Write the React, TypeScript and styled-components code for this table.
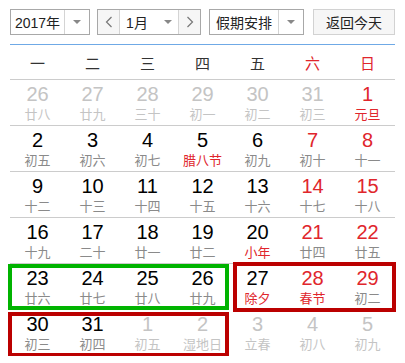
import styled, { createGlobalStyle } from "styled-components";

const GlobalStyle = createGlobalStyle`
    body {
        margin: 0;
        background: #fff;
        font-family: "Liberation Sans", "Noto Sans CJK SC", sans-serif;
    }
`;

type Day = { d: number; l: string; muted?: boolean; red?: boolean; fest?: boolean };

// six weeks of January 2017, Monday first
const weeks: Day[][] = [
    [
        { d: 26, l: "廿八", muted: true },
        { d: 27, l: "廿九", muted: true },
        { d: 28, l: "三十", muted: true },
        { d: 29, l: "初一", muted: true },
        { d: 30, l: "初二", muted: true },
        { d: 31, l: "初三", muted: true },
        { d: 1, l: "元旦", red: true, fest: true },
    ],
    [
        { d: 2, l: "初五" },
        { d: 3, l: "初六" },
        { d: 4, l: "初七" },
        { d: 5, l: "腊八节", fest: true },
        { d: 6, l: "初九" },
        { d: 7, l: "初十", red: true },
        { d: 8, l: "十一", red: true },
    ],
    [
        { d: 9, l: "十二" },
        { d: 10, l: "十三" },
        { d: 11, l: "十四" },
        { d: 12, l: "十五" },
        { d: 13, l: "十六" },
        { d: 14, l: "十七", red: true },
        { d: 15, l: "十八", red: true },
    ],
    [
        { d: 16, l: "十九" },
        { d: 17, l: "二十" },
        { d: 18, l: "廿一" },
        { d: 19, l: "廿二" },
        { d: 20, l: "小年", fest: true },
        { d: 21, l: "廿四", red: true },
        { d: 22, l: "廿五", red: true },
    ],
    [
        { d: 23, l: "廿六" },
        { d: 24, l: "廿七" },
        { d: 25, l: "廿八" },
        { d: 26, l: "廿九" },
        { d: 27, l: "除夕", fest: true },
        { d: 28, l: "春节", red: true, fest: true },
        { d: 29, l: "初二", red: true },
    ],
    [
        { d: 30, l: "初三" },
        { d: 31, l: "初四" },
        { d: 1, l: "初五", muted: true },
        { d: 2, l: "湿地日", muted: true },
        { d: 3, l: "立春", muted: true },
        { d: 4, l: "初八", muted: true },
        { d: 5, l: "初九", muted: true },
    ],
];

const weekdays = ["一", "二", "三", "四", "五", "六", "日"];

// highlight frames drawn over the last two weeks
const marks = [
    { row: 5, cols: "1 / 5", color: "#00b300", inset: "0 1px 0 -2px" },
    { row: 5, cols: "5 / 8", color: "#bb0000", inset: "-2px -1px -2px 3px" },
    { row: 6, cols: "1 / 5", color: "#bb0000", inset: "2px 1px -1px -2px" },
];

const Page = styled.div`
    padding: 9px 10px 0;
    width: 385px;
`;

const Toolbar = styled.div`
    display: flex;
    align-items: center;
    height: 26px;
    padding-bottom: 9px;
    border-bottom: 1px solid #6fa9e6;
`;

const Select = styled.div<{ w: number; gap: number }>`
    display: flex;
    width: ${({ w }) => w}px;
    height: 26px;
    box-sizing: border-box;
    margin-right: ${({ gap }) => gap}px;
    border: 1px solid #a8a8a8;
    background: #fff;
    font-size: 14px;
    color: #222;
`;

const SelectText = styled.div<{ cjk?: boolean }>`
    flex: 1;
    display: flex;
    align-items: center;
    justify-content: center;
    font-family: ${({ cjk }) =>
        cjk ? `"Noto Sans CJK SC", sans-serif` : `"Liberation Sans", "Noto Sans CJK SC", sans-serif`};
`;

const Caret = styled.div`
    width: 24px;
    display: flex;
    align-items: center;
    justify-content: center;
    border-left: 1px solid #d4d4d4;

    &::after {
        content: "";
        border-left: 4px solid transparent;
        border-right: 4px solid transparent;
        border-top: 4px solid #888;
    }
`;

const InlineCaret = styled.span`
    margin-left: 16px;
    border-left: 4px solid transparent;
    border-right: 4px solid transparent;
    border-top: 4px solid #888;
`;

const StepBtn = styled.div<{ side: "l" | "r" }>`
    width: 21px;
    display: flex;
    align-items: center;
    justify-content: center;
    background: #f6f6f6;
    ${({ side }) => (side === "l" ? "border-right" : "border-left")}: 1px solid #d4d4d4;
`;

const TodayButton = styled.div`
    width: 82px;
    height: 26px;
    box-sizing: border-box;
    border: 1px solid #d2d2d2;
    background: #f6f6f6;
    display: flex;
    align-items: center;
    justify-content: center;
    font-family: "Noto Sans CJK SC", sans-serif;
    font-size: 14px;
    color: #222;
`;

const Grid = styled.div`
    display: grid;
    grid-template-columns: repeat(7, 55px);
    grid-auto-rows: 46px;
`;

const WeekHead = styled.div`
    display: grid;
    grid-template-columns: repeat(7, 55px);
    height: 34px;
    border-bottom: 1px solid #cccccc;
`;

const WeekName = styled.div<{ red: boolean }>`
    display: flex;
    align-items: center;
    justify-content: center;
    font-family: "Noto Sans CJK SC", sans-serif;
    font-size: 15px;
    color: ${({ red }) => (red ? "#e0262c" : "#333")};
`;

const Cell = styled.div<{ row: number; col: number }>`
    grid-row: ${({ row }) => row};
    grid-column: ${({ col }) => col};
    display: flex;
    flex-direction: column;
    align-items: center;
    padding-top: 4px;
    box-sizing: border-box;
    border-bottom: ${({ row }) => (row < 5 ? "1px solid #cccccc" : "none")};
`;

const Num = styled.div<{ tone: string }>`
    font-family: "Liberation Sans", Arial, sans-serif;
    font-size: 20px;
    line-height: 20px;
    color: ${({ tone }) => tone};
`;

const Lunar = styled.div<{ tone: string }>`
    margin-top: 2px;
    font-family: "Noto Sans CJK SC", sans-serif;
    font-size: 13px;
    line-height: 16px;
    color: ${({ tone }) => tone};
`;

const Mark = styled.div<{ row: number; cols: string; color: string; inset: string }>`
    grid-row: ${({ row }) => row};
    grid-column: ${({ cols }) => cols};
    margin: ${({ inset }) => inset};
    border: 4px solid ${({ color }) => color};
    box-sizing: border-box;
    pointer-events: none;
    z-index: 2;
`;

const Chevron = ({ dir }: { dir: "l" | "r" }) => (
    <svg width="8" height="12" viewBox="0 0 8 12">
        <polyline
            points={dir === "l" ? "6.5,1 1.5,6 6.5,11" : "1.5,1 6.5,6 1.5,11"}
            fill="none"
            stroke="#777"
            strokeWidth="1.2"
        />
    </svg>
);

export default function App() {
    return (
        <Page>
            <GlobalStyle />
            <Toolbar>
                <Select w={80} gap={7}>
                    <SelectText>2017年</SelectText>
                    <Caret />
                </Select>
                <Select w={104} gap={8}>
                    <StepBtn side="l">
                        <Chevron dir="l" />
                    </StepBtn>
                    <SelectText>
                        1月
                        <InlineCaret />
                    </SelectText>
                    <StepBtn side="r">
                        <Chevron dir="r" />
                    </StepBtn>
                </Select>
                <Select w={95} gap={9}>
                    <SelectText cjk>假期安排</SelectText>
                    <Caret />
                </Select>
                <TodayButton>返回今天</TodayButton>
            </Toolbar>

            <WeekHead>
                {weekdays.map((w, i) => (
                    <WeekName key={w} red={i >= 5}>
                        {w}
                    </WeekName>
                ))}
            </WeekHead>

            <Grid>
                {weeks.map((week, r) =>
                    week.map((day, c) => {
                        const numTone = day.muted ? "#c4c4c4" : day.red ? "#e0262c" : "#000";
                        const lunarTone = day.muted
                            ? "#c4c4c4"
                            : day.fest
                            ? "#e0262c"
                            : "#8a8a8a";
                        return (
                            <Cell key={`${r}-${c}`} row={r + 1} col={c + 1}>
                                <Num tone={numTone}>{day.d}</Num>
                                <Lunar tone={lunarTone}>{day.l}</Lunar>
                            </Cell>
                        );
                    })
                )}
                {marks.map((m) => (
                    <Mark key={`${m.row}-${m.cols}`} row={m.row} cols={m.cols} color={m.color} inset={m.inset} />
                ))}
            </Grid>
        </Page>
    );
}
